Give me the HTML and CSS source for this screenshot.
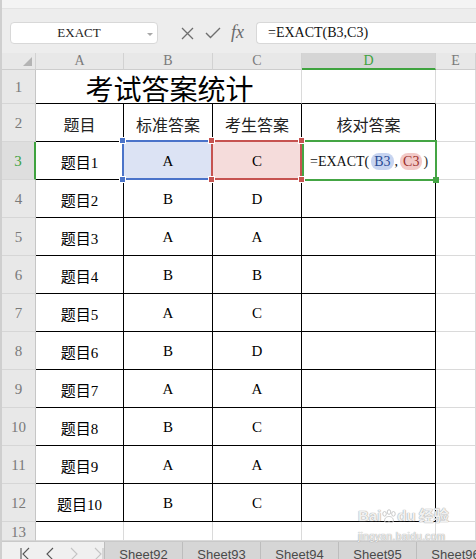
FILE: index.html
```html
<!DOCTYPE html>
<html lang="zh-CN">
<head>
<meta charset="utf-8">
<title>EXACT</title>
<link rel="stylesheet" href="styles.css">
</head>
<body>
<div class="app">
  <div class="topstrip"></div>
  <div class="fbar">
    <div class="namebox">EXACT<span class="nb-arrow"></span></div>
    <div class="fbtns">
      <svg class="ic-x" width="13" height="13" viewBox="0 0 13 13"><path d="M1 1L12 12M12 1L1 12" stroke="#6e6e6e" stroke-width="1.3" fill="none"/></svg>
      <svg class="ic-ok" width="16" height="12" viewBox="0 0 16 12"><path d="M1 6L5.5 10.5L15 1" stroke="#6e6e6e" stroke-width="1.4" fill="none"/></svg>
      <span class="ic-fx">fx</span>
    </div>
    <div class="finput">=EXACT(B3,C3)</div>
  </div>

  <div class="sheet">
    <div class="corner"><span class="tri"></span></div>
    <div class="ch">A</div>
    <div class="ch">B</div>
    <div class="ch">C</div>
    <div class="ch ch-sel">D</div>
    <div class="ch">E</div>

    <div class="rh">1</div>
    <div class="c title bb">考试答案统计</div>
    <div class="c bb"></div>
    <div class="c"></div>

    <div class="rh">2</div>
    <div class="c t hd">题目</div>
    <div class="c t hd">标准答案</div>
    <div class="c t hd">考生答案</div>
    <div class="c t hd">核对答案</div>
    <div class="c"></div>

    <div class="rh rh-sel">3</div>
    <div class="c t">题目1</div>
    <div class="c t sel-b">A<i class="h tl"></i><i class="h bl"></i><i class="h tr"></i><i class="h br"></i></div>
    <div class="c t sel-c">C<i class="h tl"></i><i class="h bl"></i><i class="h tr"></i><i class="h br"></i></div>
    <div class="c t sel-d"><span class="ftxt">=EXACT<span class="pl">(</span><span class="ref rb">B3</span><span class="cm">,</span><span class="ref rc">C3</span><span class="rp">)</span></span><i class="gh"></i></div>
    <div class="c"></div>

    <div class="rh">4</div>
    <div class="c t">题目2</div><div class="c t">B</div><div class="c t">D</div><div class="c t"></div><div class="c"></div>
    <div class="rh">5</div>
    <div class="c t">题目3</div><div class="c t">A</div><div class="c t">A</div><div class="c t"></div><div class="c"></div>
    <div class="rh">6</div>
    <div class="c t">题目4</div><div class="c t">B</div><div class="c t">B</div><div class="c t"></div><div class="c"></div>
    <div class="rh">7</div>
    <div class="c t">题目5</div><div class="c t">A</div><div class="c t">C</div><div class="c t"></div><div class="c"></div>
    <div class="rh">8</div>
    <div class="c t">题目6</div><div class="c t">B</div><div class="c t">D</div><div class="c t"></div><div class="c"></div>
    <div class="rh">9</div>
    <div class="c t">题目7</div><div class="c t">A</div><div class="c t">A</div><div class="c t"></div><div class="c"></div>
    <div class="rh">10</div>
    <div class="c t">题目8</div><div class="c t">B</div><div class="c t">C</div><div class="c t"></div><div class="c"></div>
    <div class="rh">11</div>
    <div class="c t">题目9</div><div class="c t">A</div><div class="c t">A</div><div class="c t"></div><div class="c"></div>
    <div class="rh">12</div>
    <div class="c t">题目10</div><div class="c t">B</div><div class="c t">C</div><div class="c t"></div><div class="c"></div>
    <div class="rh">13</div>
    <div class="c"></div><div class="c"></div><div class="c"></div><div class="c"></div><div class="c"></div>
  </div>

  <div class="tabs">
    <div class="nav">
      <svg width="10" height="14" viewBox="0 0 10 14"><path d="M1 1V13M9 1L3 7L9 13" stroke="#555" stroke-width="1.1" fill="none"/></svg>
      <svg width="8" height="14" viewBox="0 0 8 14"><path d="M7 1L1 7L7 13" stroke="#555" stroke-width="1.1" fill="none"/></svg>
      <svg width="8" height="14" viewBox="0 0 8 14"><path d="M1 1L7 7L1 13" stroke="#c4c4c4" stroke-width="1.1" fill="none"/></svg>
      <svg width="10" height="14" viewBox="0 0 10 14"><path d="M1 1L7 7L1 13M9 1V13" stroke="#c4c4c4" stroke-width="1.1" fill="none"/></svg>
    </div>
    <div class="tab">Sheet92</div>
    <div class="tab">Sheet93</div>
    <div class="tab">Sheet94</div>
    <div class="tab">Sheet95</div>
    <div class="tab">Sheet96</div>
  </div>
</div>
<div class="wm">
  <div class="wm1">Bai<svg width="16" height="15" viewBox="0 0 18 16"><g fill="none" stroke="#c2c2c2" stroke-width="1"><ellipse cx="4" cy="5" rx="2" ry="2.6"/><ellipse cx="9" cy="3" rx="2" ry="2.6"/><ellipse cx="14" cy="5" rx="2" ry="2.6"/><path d="M4 13C4 9 7 8 9 8C11 8 14 9 14 13C14 15 11 15 9 14C7 15 4 15 4 13Z"/></g></svg>du<span class="wmcn">经验</span></div>
  <div class="wm2">jingyan.baidu.com</div>
</div>
</body>
</html>
```
FILE: styles.css
```css
html, body {
  margin: 0;
  padding: 0;
}
body {
  width: 476px;
  height: 559px;
  overflow: hidden;
  background: #ffffff;
  position: relative;
  font-family: "Liberation Serif", "Noto Sans CJK SC", serif;
  color: #000;
}
.app {
  display: flex;
  flex-direction: column;
  height: 559px;
  border-left: 2px solid #cfcfcf;
}
.topstrip {
  height: 8px;
  flex-shrink: 0;
  background: #f4f4f4;
  border-bottom: 1px solid #e3e3e3;
}
.fbar {
  height: 44px;
  flex-shrink: 0;
  background: #ededed;
  display: flex;
  align-items: flex-start;
  padding-top: 13px;
  padding-left: 8px;
  box-sizing: border-box;
}
.namebox {
  width: 148px;
  height: 22px;
  box-sizing: border-box;
  border: 1px solid #d8d8d8;
  border-radius: 4px;
  background: #fff;
  display: flex;
  align-items: center;
  justify-content: center;
  padding-right: 10px;
  font-size: 13px;
  color: #222;
  position: relative;
}
.nb-arrow {
  position: absolute;
  right: 4px;
  top: 10px;
  border-left: 3px solid transparent;
  border-right: 3px solid transparent;
  border-top: 3px solid #a8a8a8;
}
.fbtns {
  width: 98px;
  height: 22px;
  display: flex;
  align-items: center;
}
.ic-x {
  margin-left: 23px;
}
.ic-ok {
  margin-left: 11px;
}
.ic-fx {
  margin-left: 10px;
  font-family: "Liberation Serif", serif;
  font-style: italic;
  font-size: 18px;
  color: #6a6a6a;
  line-height: 18px;
  margin-top: -2px;
}
.finput {
  flex: 1;
  height: 22px;
  box-sizing: border-box;
  border: 1px solid #d8d8d8;
  border-right: none;
  border-radius: 4px 0 0 4px;
  background: #fff;
  padding-left: 11px;
  font-size: 14px;
  line-height: 20px;
  color: #111;
}

.sheet {
  flex-shrink: 0;
  display: grid;
  grid-template-columns: 34px 88px 89px 89px 134px 1fr;
  grid-template-rows: 17px 34px repeat(11, 38px) 19px;
  background: #fff;
}
.corner, .ch, .rh, .c {
  box-sizing: border-box;
}
.corner {
  background: #e8e8e8;
  border-right: 1px solid #d2d2d2;
  border-bottom: 1px solid #cdcdcd;
  position: relative;
}
.tri {
  position: absolute;
  right: 3px;
  bottom: 3px;
  width: 0;
  height: 0;
  border-left: 9px solid transparent;
  border-bottom: 9px solid #b4b4b4;
}
.ch {
  background: #e8e8e8;
  border-right: 1px solid #d2d2d2;
  border-bottom: 1px solid #cdcdcd;
  color: #7a7a7a;
  font-size: 14px;
  display: flex;
  align-items: center;
  justify-content: center;
}
.ch-sel {
  background: #d5d5d5;
  color: #3fa33f;
  border-bottom: 2px solid #3fa33f;
}
.rh {
  background: #e8e8e8;
  border-right: 1px solid #c6c6c6;
  border-bottom: 1px solid #d6d6d6;
  color: #7a7a7a;
  font-size: 15px;
  display: flex;
  align-items: center;
  justify-content: center;
  padding-top: 2px;
}
.rh-sel {
  background: #dedede;
  color: #3fa33f;
  border-right: 2px solid #3fa33f;
}
.c {
  border-right: 1px solid #dadada;
  border-bottom: 1px solid #dadada;
  display: flex;
  align-items: center;
  justify-content: center;
  font-size: 15px;
  padding-top: 2px;
  position: relative;
}
.c.t {
  border-right-color: #000;
  border-bottom-color: #000;
}
.c.bb {
  border-bottom-color: #000;
}
.c.hd {
  font-size: 16px;
  color: #222;
}
.title {
  grid-column: span 3;
  align-items: flex-end;
  font-family: "Noto Sans CJK SC", sans-serif;
  font-size: 28px;
  line-height: 28px;
  padding-top: 0;
  padding-bottom: 1px;
  padding-left: 2px;
}

/* selections */
.sel-b { z-index: 2; }
.sel-c { z-index: 3; }
.sel-d { z-index: 1; justify-content: flex-start; padding-left: 8px; }
.sel-b::before, .sel-c::before, .sel-d::before {
  content: "";
  position: absolute;
  left: -2px;
  top: -2px;
  right: -1px;
  bottom: -1px;
  border: 2px solid;
  z-index: -1;
}
.sel-b::before {
  border-color: #4a73c9;
  background: #dce3f4;
}
.sel-c::before {
  border-color: #c65350;
  background: #f5dcdb;
}
.sel-d::before {
  border-color: #44a544;
  background: #fff;
  left: 0;
  right: -2px;
  bottom: -2px;
}
.h {
  position: absolute;
  width: 5px;
  height: 5px;
  border: 1px solid #fff;
}
.sel-b .h { background: #4a73c9; }
.sel-c .h { background: #c65350; }
.h.tl { left: -5px; top: -5px; }
.h.tr { right: -4px; top: -5px; }
.h.bl { left: -5px; bottom: -4px; }
.h.br { right: -4px; bottom: -4px; }
.gh {
  position: absolute;
  right: -4px;
  bottom: -4px;
  width: 6px;
  height: 6px;
  background: #44a544;
}
.ftxt {
  font-size: 14px;
  white-space: nowrap;
  color: #111;
}
.pl {
  margin-right: 2px;
}
.cm {
  margin: 0 2px 0 1px;
}
.ref {
  border-radius: 8px;
  padding: 1px 3px;
}
.rb {
  background: #c7d4f0;
  color: #2b4c96;
}
.rc {
  background: #f2c9c7;
  color: #9c2f2c;
}
.rp {
  margin-left: 1px;
  color: #333;
}

/* sheet tabs */
.tabs {
  height: 24px;
  flex-shrink: 0;
  display: flex;
  border-top: 1px solid #c9c9c9;
  background: #eeeeee;
}
.nav {
  width: 119px;
  display: flex;
  align-items: center;
  gap: 16px;
  padding-left: 18px;
  box-sizing: border-box;
  background: #f0f0f0;
}
.tab {
  width: 78px;
  flex-shrink: 0;
  box-sizing: border-box;
  background: #d6d6d6;
  border-left: 1px solid #bdbdbd;
  display: flex;
  align-items: center;
  justify-content: center;
  font-family: "Liberation Sans", Arial, sans-serif;
  font-size: 13px;
  color: #4a4a4a;
}

/* watermark */
.wm {
  position: absolute;
  left: 358px;
  top: 505px;
  white-space: nowrap;
  color: rgba(255, 255, 255, 0.85);
  text-shadow: 0 0 1px #a0a0a0, 0 0 1px #a0a0a0;
  font-family: "Liberation Sans", "Noto Sans CJK SC", sans-serif;
}
.wm1 {
  font-size: 15px;
  font-weight: bold;
  line-height: 22px;
  display: flex;
  align-items: center;
}
.wmcn {
  margin-left: 3px;
  font-size: 15px;
}
.wm2 {
  font-size: 10px;
  line-height: 12px;
  letter-spacing: 0.4px;
  margin-top: 4px;
}
```
